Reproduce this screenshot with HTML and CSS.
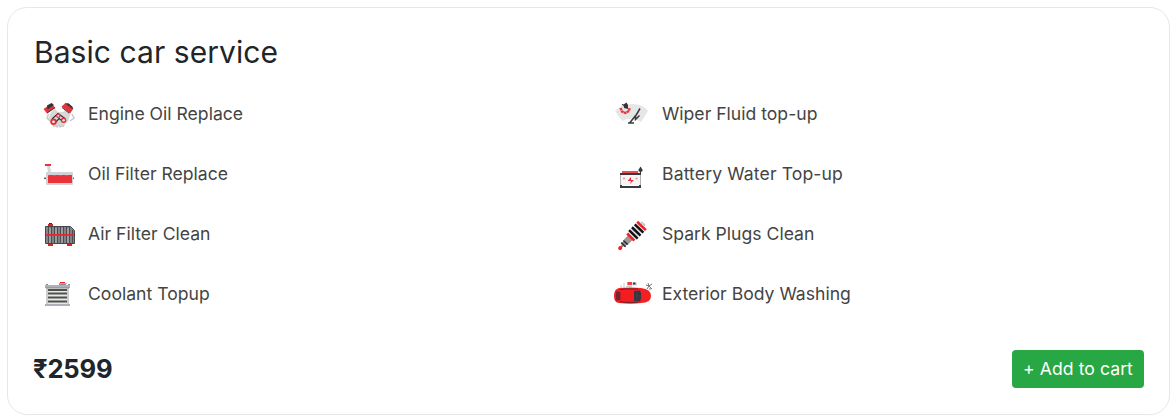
FILE: index.html
```html
<!DOCTYPE html>
<html lang="en">
<head>
<meta charset="utf-8">
<title>Basic car service</title>
<link rel="stylesheet" href="styles.css">
</head>
<body>
<section class="card">
  <h2 class="title">Basic car service</h2>
  <ul class="services">
    <li class="service">
      <svg class="icon" viewBox="0 0 50 40">
        <path d="M15 18l4-3 3 3h5l4-4 4 4-3 10-3 2-1 3H17l-1-3-4-5z" fill="#d8d8d8"/>
        <path d="M12.500 20l-1.500 4 3 3M36 20l2 4-4 3" fill="none" stroke="#c9c9c9" stroke-width="1.500"/>
        <path d="M18 31v2M21 31v3M24 31v3M27 31v2" stroke="#bbb" stroke-width=".8"/>
        <path d="M7.500 15l8-5.500 4 4.500-8.500 5.500z" fill="#e9323a"/>
        <path d="M11 11.500l4.500-2.500 2.500 2-6.500 4.500z" fill="#353238"/>
        <path d="M11 19l8-5.500" stroke="#4a3b40" stroke-width="1"/>
        <path d="M25.500 12.500l3.500-3 8.500 5-3.500 5z" fill="#e9323a"/>
        <path d="M28.500 9.200h4l4 3.500.5 2.500z" fill="#353238"/>
        <path d="M26 13.500l7 5.500" stroke="#4a3b40" stroke-width="1"/>
        <path d="M16 25l6-5.500 7 5M19 29l4-4.500 4 3" fill="none" stroke="#333" stroke-width="1.200"/>
        <circle cx="17.500" cy="27.800" r="3.200" fill="#e02c34"/><circle cx="17.500" cy="27.800" r="1.400" fill="#eee"/>
        <circle cx="27.600" cy="26.200" r="2.700" fill="#e02c34"/><circle cx="27.600" cy="26.200" r="1.200" fill="#eee"/>
        <circle cx="22.300" cy="21.700" r="2.200" fill="#e02c34"/><circle cx="22.300" cy="21.700" r="1" fill="#eee"/>
      </svg>
      <span>Engine Oil Replace</span>
    </li>
    <li class="service">
      <svg class="icon" viewBox="0 0 50 40">
        <path d="M11 12h3l1 6h-3z" fill="#d4d6d8"/>
        <path d="M9 10h6v2H9z" fill="#e9323a"/>
        <path d="M8 23.500h30v1.600H8z" fill="#666"/>
        <rect x="10" y="18" width="27" height="13" rx="1" fill="#d0d3d6"/>
        <path d="M12 21h24v8H12z" fill="#e9323a"/>
        <path d="M12 21h2v1h-2zM17 21h3v1h-3zM23 21h3v1h-3zM29 21h3v1h-3z" fill="#a36b70"/>
      </svg>
      <span>Oil Filter Replace</span>
    </li>
    <li class="service">
      <svg class="icon" viewBox="0 0 50 40">
        <path d="M12 10h5v2h-5zM12 29h5v3h-5zM31 29h5v3h-5z" fill="#cf2930"/>
        <path d="M13 9h3v1h-3z" fill="#333"/>
        <path d="M9.500 12.500h25l4 4v13h-29z" fill="#88898b" stroke="#46474a"/>
        <path d="M12.500 13v16M15.500 13v16M18.500 13v16M21.500 13v16M24.500 13v16M27.500 13v16M30.500 13v16M33.500 13v16M36.500 16v13" stroke="#4c4c4f" stroke-width="1.200"/>
        <path d="M14 14v15M20 14v15M26 14v15M32 14v15" stroke="#bcbdbf" stroke-width=".9"/>
        <path d="M10 20h28v1.700H10z" fill="#e32831"/>
      </svg>
      <span>Air Filter Clean</span>
    </li>
    <li class="service">
      <svg class="icon" viewBox="0 0 50 40">
        <path d="M24 8h5v2h-5z" fill="#f2252d"/><path d="M23 9h8v1h-8z" fill="#ef969a"/>
        <path d="M11 14h21v16H11z" fill="#e8e8e6"/>
        <path d="M12 16h19M12 19.500h19M12 23.500h19M12 27.500h19" stroke="#4d504d" stroke-width="2"/>
        <path d="M10 14h2v17h-2zM31 14h2v17h-2z" fill="#cccdd1"/>
        <path d="M9 11h25v3H9zM9 30h25v2H9z" fill="#aeafb8"/>
        <path d="M10 10h2v1h-2zM23 10h7v1h-7zM32 10h2v1h-2z" fill="#8c8d94"/>
        <path d="M10 14h23" stroke="#777781" stroke-width=".7"/>
      </svg>
      <span>Coolant Topup</span>
    </li>
    <li class="service">
      <svg class="icon" viewBox="0 0 50 40">
        <path d="M7 17q5-6 17-7 11 0 16 7l-7 11q-9-6-19-1z" fill="#e6e6e6"/>
        <path d="M15.500 10.500l3-2 1.500 2.500v4l-4-1z" fill="#383439"/>
        <path d="M14 10.500l5 2" stroke="#383439" stroke-width="1.300"/>
        <path d="M12.500 14l1.500 3.500 3.500 1.500 3.500-2 .5-3" fill="none" stroke="#ed3038" stroke-width="2.300" stroke-dasharray="2.600 .4"/>
        <path d="M20 29h6M22 28.500l6.500-8 3.500-6M27.500 21v4.500l4-4" fill="none" stroke="#36383b" stroke-width="1.500"/>
      </svg>
      <span>Wiper Fluid top-up</span>
    </li>
    <li class="service">
      <svg class="icon" viewBox="0 0 50 40">
        <path d="M13 19v12h19V19z" fill="#f5f5f5"/>
        <path d="M14 17h16v2H14z" fill="#f34b52"/>
        <path d="M12 19h21v2H12z" fill="#393a3e"/>
        <path d="M12.500 21v12M32.500 21v12" stroke="#a0a1a5" stroke-width=".8"/>
        <path d="M12 31h2v1h17v-1h2v3H12z" fill="#393a3e"/>
        <path d="M23 23l-3.500 4h3.500l-1 3 4-4h-3z" fill="#ed3038"/>
        <path d="M15 24.500h2M27.500 24.500h2" stroke="#ee8b90" stroke-width="1.300"/>
        <path d="M32.500 12.500l2.200 3.500q0 2-2.200 2t-2.200-2z" fill="#38393d"/><path d="M32.500 17v2" stroke="#38393d"/>
      </svg>
      <span class="label-wide">Battery Water Top-up</span>
    </li>
    <li class="service">
      <svg class="icon" viewBox="0 0 50 40">
        <g transform="translate(24.300 21.500) rotate(-46)">
          <path d="M-18-1h6v2h-6z" fill="#7c7c7c"/>
          <circle cx="-17.500" cy="0" r="2" fill="#f51e22"/>
          <path d="M-14-2.500h5v5h-5zM-9-3.200h6v6.400h-6z" fill="#9a9a9a"/>
          <path d="M-13.500-3h1.500v6h-1.500zM-10.500-3H-9v6h-1.500z" fill="#292d35"/>
          <path d="M-3.500-5H-.7V5H-3.500z" fill="#f51e22"/>
          <path d="M-.7-4.500H13v9H-.7z" fill="#e2e2e2"/>
          <path d="M.3-6h2.500V6H.3zM4.400-6h2.500V6H4.400zM8.500-6H11V6H8.500z" fill="#111217"/>
          <path d="M12-6h2.600V6H12z" fill="#f51e22"/>
          <path d="M14.600-3h2.300v5.500h-2.300z" fill="#ccc"/>
        </g>
      </svg>
      <span>Spark Plugs Clean</span>
    </li>
    <li class="service">
      <svg class="icon" viewBox="0 0 50 40">
        <path d="M13 14v-3M16 14V9" stroke="#ccc" stroke-width="1"/>
        <path d="M19 8.500h10v3H19z" fill="#d9d9d9"/><path d="M19.500 8h4.500v3h-4.500z" fill="#ed4048"/><path d="M25 8.500h2.500v2H25z" fill="#333"/>
        <path d="M18 12.500h6" stroke="#ccc"/>
        <path d="M6 22q0-7 5-8 12-1 22 0 10 1 10 8t-10 7q-10 1.500-22 0-5 0-5-7z" fill="#f31f22"/>
        <path d="M8.500 17l4 1.500v7l-4 1.500q-1.500-5 0-10z" fill="#7a232c"/>
        <path d="M12 16l4-1h14M12 27.500l4 .8h14" fill="none" stroke="#64232c" stroke-width="1"/>
        <path d="M14 17.500h11v8.500H14z" fill="#f51c20"/>
        <path d="M26 17l6-.5q2.500 5.500 0 11l-6-.5z" fill="#343740"/>
        <path d="M26 22h7M29 17v10" stroke="#60404a" stroke-width=".6"/>
        <path d="M38 11l3 1 3-2M39 15l2-3 3 3M40 9l1 3M42 14v2" fill="none" stroke="#555" stroke-width=".8"/>
      </svg>
      <span>Exterior Body Washing</span>
    </li>
  </ul>
  <footer class="footer">
    <strong class="price">₹2599</strong>
    <button class="add" type="button">+ Add to cart</button>
  </footer>
</section>
</body>
</html>
```
FILE: styles.css
```css
* { box-sizing: border-box; }
body {
  margin: 0;
  padding: 7px;
  background: #fff;
  font-family: Inter, "Liberation Sans", sans-serif;
  color: #212529;
}
.card {
  width: 1163px;
  height: 408px;
  padding: 25px 25px 0 26px;
  border: 1px solid #e7e7e7;
  border-radius: 20px;
}
.title {
  margin: 0;
  font-size: 30px;
  font-weight: 400;
  line-height: 38px;
  letter-spacing: 0.06px;
}
.services {
  display: grid;
  grid-template-columns: 572px 1fr;
  grid-template-rows: repeat(4, 60px);
  grid-auto-flow: column;
  margin: 13px 0 0 2px;
  padding: 0;
  list-style: none;
}
.service {
  display: flex;
  align-items: center;
  gap: 2px;
  font-size: 17.6px;
  color: #444;
}
.service span { padding-bottom: 1px; }
.service .label-wide { letter-spacing: 0.12px; }
.service:nth-child(n + 5) { gap: 4px; }
.icon { width: 50px; height: 40px; flex: none; }
.footer {
  display: flex;
  align-items: center;
  justify-content: space-between;
  margin-top: 26px;
}
.price {
  margin-left: -1px;
  padding-bottom: 1px;
  font-size: 25.6px;
  font-weight: 700;
  line-height: 36px;
  letter-spacing: -0.2px;
}
.add {
  width: 132px;
  height: 38px;
  padding: 0 0 1px;
  border: 0;
  border-radius: 4px;
  background: #28a745;
  color: #fff;
  font: 400 17.6px Inter, "Liberation Sans", sans-serif;
  letter-spacing: 0.06px;
}
```
